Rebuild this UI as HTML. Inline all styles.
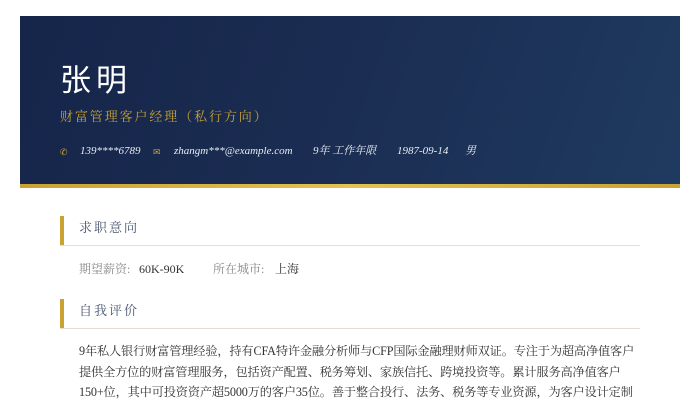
<!DOCTYPE html>
<html><head><meta charset="utf-8"><style>
*{margin:0;padding:0;box-sizing:border-box}
body{width:700px;height:400px;overflow:hidden;background:#fff;font-family:"Liberation Serif","Noto Serif CJK SC",serif;position:relative}
.hd{position:absolute;left:20px;top:16px;width:660px;height:168px;background:linear-gradient(110deg,#16254a 0%,#1b2d52 50%,#1f3a60 100%)}
.gb{position:absolute;left:20px;top:184px;width:660px;height:4px;background:linear-gradient(90deg,#c9a231,#e3c250,#c9a231)}
.nm{position:absolute;left:60px;top:58px;color:#fff;font-size:31px;letter-spacing:5px;font-family:"Noto Sans CJK SC",sans-serif;line-height:40px}
.tt{position:absolute;left:60px;top:108px;color:#c9a231;font-size:13px;letter-spacing:1.9px;line-height:18px}
.ct{position:absolute;left:60px;top:143px;color:#e8ecf3;font-size:11px;font-style:italic;line-height:16px;white-space:nowrap}
.ct span{position:absolute}
.ic{color:#c9a231;font-style:normal;font-size:9px}
.sb{position:absolute;left:60px;width:4px;height:30px;background:#c9a231}
.sh{position:absolute;left:79px;color:#4a5570;font-size:13px;letter-spacing:2px;line-height:20px}
.ln{position:absolute;left:60px;width:580px;height:1px;background:#e8ddd0}
.kv{position:absolute;top:260px;font-size:12px;line-height:18px;white-space:nowrap}
.p{position:absolute;left:79px;top:341px;width:575px;font-size:12.2px;line-height:20.5px;color:#333;letter-spacing:-0.15px}
</style></head><body>
<div class="hd"></div><div class="gb"></div>
<div class="nm">张明</div>
<div class="tt">财富管理客户经理（私行方向）</div>
<div class="ct">
<span class="ic" style="left:0;top:1px">✆</span>
<span style="left:20px">139****6789</span>
<span class="ic" style="left:93px;top:1px">✉</span>
<span style="left:114px">zhangm***@example.com</span>
<span style="left:253px">9年 工作年限</span>
<span style="left:337px">1987-09-14</span>
<span style="left:405px">男</span>
</div>
<div class="sb" style="top:216px"></div>
<div class="sh" style="top:218px">求职意向</div>
<div class="ln" style="top:245px"></div>
<div class="kv" style="left:79px;color:#888">期望薪资:</div>
<div class="kv" style="left:139px;color:#333">60K-90K</div>
<div class="kv" style="left:213px;color:#888">所在城市:</div>
<div class="kv" style="left:275px;color:#333">上海</div>
<div class="sb" style="top:299px"></div>
<div class="sh" style="top:301px">自我评价</div>
<div class="ln" style="top:328px"></div>
<div class="p">9年私人银行财富管理经验，持有CFA特许金融分析师与CFP国际金融理财师双证。专注于为超高净值客户<br>提供全方位的财富管理服务，包括资产配置、税务筹划、家族信托、跨境投资等。累计服务高净值客户<br>150+位，其中可投资资产超5000万的客户35位。善于整合投行、法务、税务等专业资源，为客户设计定制</div>
</body></html>
